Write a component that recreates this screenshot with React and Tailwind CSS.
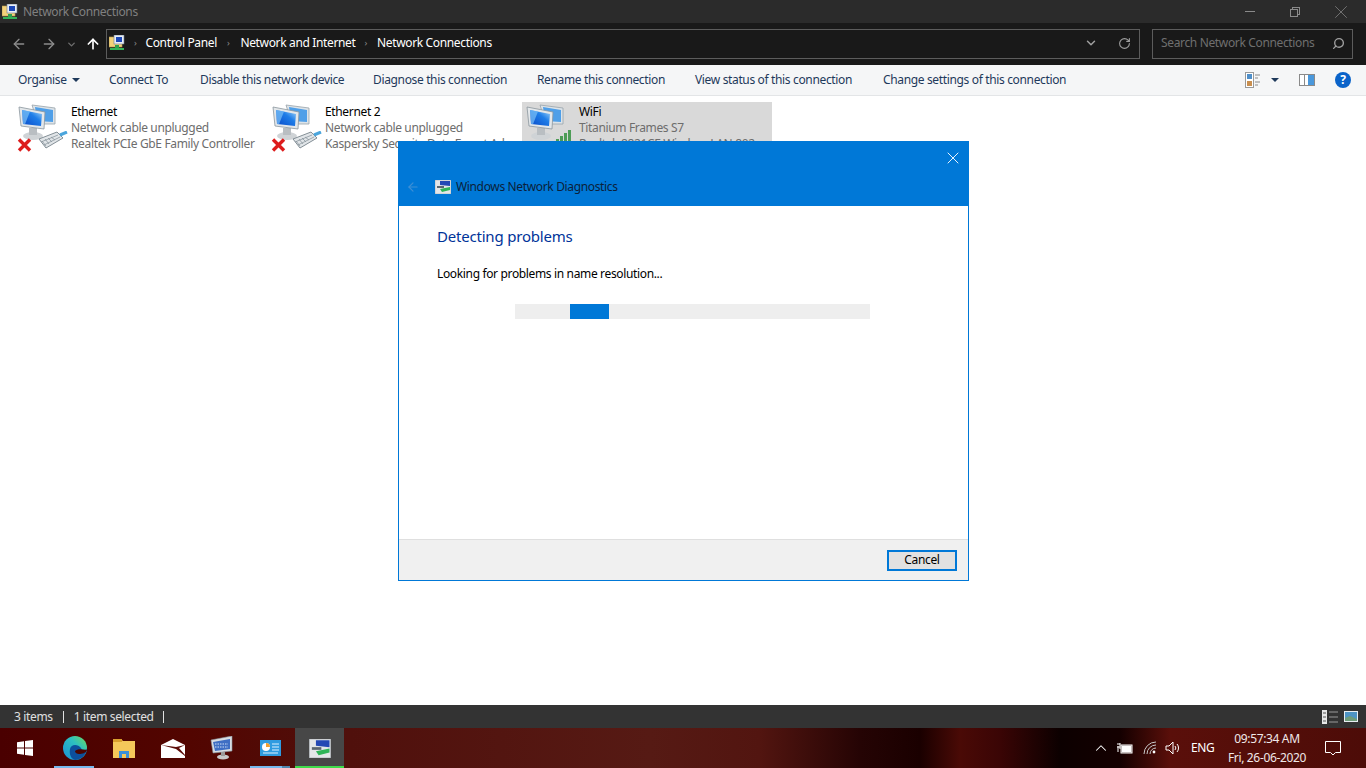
import { ArrowLeft, ArrowRight, ArrowUp, ChevronDown, ChevronUp, RotateCw, Search, X } from 'lucide-react';

const font = { fontFamily: '"Noto Sans", "Liberation Sans", sans-serif' };

function PcIcon({ id }) {
  return (
    <svg width="42" height="40" viewBox="0 0 42 40">
      <defs>
        <linearGradient id={id} x1="0" y1="1" x2="1" y2="0">
          <stop offset="0" stopColor="#0848c8" />
          <stop offset="0.6" stopColor="#1f7ee8" />
          <stop offset="1" stopColor="#a8d8f8" />
        </linearGradient>
      </defs>
      <path d="M14 1 L37 4 L37 20 L20 20 Z" fill="#dde3e8" stroke="#98a3ab" strokeWidth="0.8" />
      <path d="M17 3 L35 6 L35 18 L19 17 Z" fill="#4f9fe8" />
      <ellipse cx="15" cy="32" rx="10" ry="4" fill="#cfd3d6" />
      <rect x="11" y="24" width="8" height="7" fill="#b9bec2" />
      <path d="M1 3 L27 8 L26 25 L3 22 Z" fill="#e3e7ea" stroke="#8a959d" strokeWidth="0.8" />
      <path d="M4 6 L24 10 L23 22 L5 20 Z" fill={`url(#${id})`} />
      <path d="M4 6 L12 7.6 L7 20.2 L5 20 Z" fill="#7cc2f6" opacity="0.7" />
    </svg>
  );
}

function RedX() {
  return (
    <svg width="15" height="14" viewBox="0 0 15 14">
      <path d="M2 1.5 L13 12.5 M13 1.5 L2 12.5" stroke="#dd1c1c" strokeWidth="3.4" />
    </svg>
  );
}

function Plug() {
  return (
    <svg width="30" height="18" viewBox="0 0 30 18">
      <path d="M1 8 L19 1 L25 7 L8 17 Z" fill="#e1e5e8" stroke="#77838b" strokeWidth="0.9" />
      <path d="M4 10 L8 15 M7 8 L11 13 M10 7 L14 11 M13 6 L17 9 M3 11 L20 4 M6 14 L22 6" stroke="#8c979e" strokeWidth="0.8" />
      <path d="M22 4 L29 1" stroke="#4aa5dc" strokeWidth="3" />
    </svg>
  );
}

function Bars() {
  return (
    <svg width="18" height="14" viewBox="0 0 18 14">
      <rect x="1" y="9" width="3" height="5" fill="#4d9c56" />
      <rect x="5" y="6" width="3" height="8" fill="#4d9c56" />
      <rect x="9" y="3" width="3" height="11" fill="#4d9c56" />
      <rect x="13" y="0" width="3" height="14" fill="#4d9c56" />
    </svg>
  );
}

function NetFolder({ size = 16 }) {
  return (
    <svg width={size} height={size} viewBox="0 0 16 16">
      <rect x="0" y="2" width="13" height="10" fill="#f3d27a" stroke="#b59b50" strokeWidth="0.6" />
      <rect x="5" y="0" width="10" height="9" fill="#e8eef5" stroke="#6c7a8a" strokeWidth="0.6" />
      <rect x="7" y="2" width="6" height="5" fill="#1c48b8" />
      <rect x="6" y="10" width="4" height="3" fill="#2e9e4f" />
      <rect x="1" y="13" width="14" height="2" fill="#33b357" />
    </svg>
  );
}

function DiagIcon({ w = 16, h = 14 }) {
  return (
    <svg width={w} height={h} viewBox="0 0 16 14">
      <rect x="0" y="0" width="16" height="14" fill="#e4e6e8" stroke="#9aa1a7" strokeWidth="0.5" />
      <path d="M5 1 L15 1 L15 6 L5 5 Z" fill="#2448b4" />
      <path d="M2 6 L9 6 L9 8 L2 8 Z" fill="#5c6670" />
      <path d="M5 9 L15 7 L15 10 L7 12 Z" fill="#2fb457" />
    </svg>
  );
}

function AdapterItem({ id, name, status, device, selected, bars }) {
  return (
    <div className={`flex w-[250px] h-[52px] ${selected ? 'bg-[#d9d9d9]' : ''}`}>
      <div className="relative w-[57px] shrink-0 pl-[4px] pt-[2px]">
        <PcIcon id={id} />
        {!bars && (
          <>
            <div className="absolute left-[3px] top-[36px]"><RedX /></div>
            <div className="absolute left-[24px] top-[29px]"><Plug /></div>
          </>
        )}
        {bars && <div className="absolute left-[33px] top-[28px]"><Bars /></div>}
      </div>
      <div className="min-w-0 pt-[2px] text-[12px] leading-[16px] whitespace-nowrap">
        <div className="text-black">{name}</div>
        <div className="text-[#6d6d6d]">{status}</div>
        <div className="text-[#6d6d6d]">{device}</div>
      </div>
    </div>
  );
}

function TaskIcon({ active, line, split, children }) {
  return (
    <div className={`relative w-[49px] h-full flex items-center justify-center ${active ? 'bg-[#474747]' : ''}`}>
      {children}
      {line && <div className="absolute bottom-0 left-[4px] right-[5px] h-[2px] bg-[#76b9ed]" />}
      {split && <div className="absolute bottom-0 right-[5px] w-[8px] h-[2px] bg-[#4f86ad]" />}
      {active && <div className="absolute bottom-0 inset-x-0 h-[2px] bg-[#3fdc4a]" />}
    </div>
  );
}

const actions = [
  ['Connect To', 'w-[91px]'],
  ['Disable this network device', 'w-[173px]'],
  ['Diagnose this connection', 'w-[164px]'],
  ['Rename this connection', 'w-[158px]'],
  ['View status of this connection', 'w-[188px]'],
  ['Change settings of this connection', 'w-[200px]'],
];

export default function App() {
  return (
    <div style={font} className="relative w-[1366px] h-[768px] overflow-hidden flex flex-col bg-white text-[12px] tracking-[-0.35px]">
      {/* title bar */}
      <div className="h-[23px] bg-[#2b2b2b] flex items-center shrink-0">
        <div className="ml-[2px] mr-[5px]"><NetFolder /></div>
        <span className="text-[#808080]">Network Connections</span>
        <div className="ml-auto flex items-center text-[#8a8a8a]">
          <div className="w-[10px] h-px bg-[#8a8a8a] mr-[35px]" />
          <div className="relative w-[10px] h-[10px] mr-[30px]">
            <div className="absolute right-0 top-0 w-[8px] h-[8px] border border-[#8a8a8a]" />
            <div className="absolute left-0 bottom-0 w-[8px] h-[8px] border border-[#8a8a8a] bg-[#2b2b2b]" />
          </div>
          <X size={22} strokeWidth={0.8} className="mr-[14px]" />
        </div>
      </div>

      {/* address bar */}
      <div className="h-[42px] bg-[#191919] flex items-center shrink-0">
        <ArrowLeft size={16} className="ml-[11px] text-[#8c8c8c]" />
        <ArrowRight size={16} className="ml-[14px] text-[#8c8c8c]" />
        <ChevronDown size={11} strokeWidth={3} className="ml-[9px] text-[#6e6e6e]" />
        <ArrowUp size={16} strokeWidth={2.5} className="ml-[8px] text-white" />
        <div className="ml-[5px] w-[1034px] h-[30px] pb-[2px] border border-[#5c5c5c] flex items-center text-white">
          <div className="ml-[2px]"><NetFolder /></div>
          <span className="ml-[9px] text-[#8c8c8c] text-[9px]">›</span>
          <span className="ml-[9px]">Control Panel</span>
          <span className="ml-[10px] text-[#8c8c8c] text-[9px]">›</span>
          <span className="ml-[11px]">Network and Internet</span>
          <span className="ml-[9px] text-[#8c8c8c] text-[9px]">›</span>
          <span className="ml-[10px]">Network Connections</span>
          <ChevronDown size={14} strokeWidth={2.5} className="ml-auto mr-[20px] text-[#a0a0a0]" />
          <RotateCw size={13} className="mr-[8px] text-[#a0a0a0]" />
        </div>
        <div className="ml-[12px] w-[201px] h-[30px] pb-[2px] border border-[#5c5c5c] flex items-center text-[#6f6f6f] pl-[8px]">
          <span className="whitespace-nowrap">Search Network Connections</span>
          <Search size={13} strokeWidth={2.5} className="ml-auto mr-[7px] text-[#a0a0a0] -scale-x-100" />
        </div>
      </div>

      {/* command bar */}
      <div className="h-[31px] bg-[#f5f6f7] border-b border-[#e3e5e7] flex items-center shrink-0 text-[#1e395b]">
        <div className="ml-[18px] w-[91px] flex items-center whitespace-nowrap">
          Organise
          <span className="ml-[5px] w-0 h-0 border-x-[4px] border-x-transparent border-t-[4px] border-t-[#1e395b]" />
        </div>
        {actions.map(([label, w]) => (
          <div key={label} className={`${w} whitespace-nowrap`}>{label}</div>
        ))}
        <div className="ml-auto flex items-center">
          <svg width="16" height="16" viewBox="0 0 16 16">
            <rect x="0.5" y="0.5" width="8" height="15" fill="#fff" stroke="#9a9a9a" />
            <rect x="2" y="2" width="5" height="5" fill="#4f8fc9" />
            <rect x="2" y="9" width="5" height="5" fill="#c98f4f" />
            <path d="M10 3h5M10 6h3M10 10h5M10 13h3" stroke="#8a8a8a" />
          </svg>
          <span className="ml-[10px] w-0 h-0 border-x-[4px] border-x-transparent border-t-[4px] border-t-[#1e395b]" />
          <svg width="16" height="12" viewBox="0 0 16 12" className="ml-[20px]">
            <rect x="0.5" y="0.5" width="15" height="11" fill="#fff" stroke="#8a8a8a" />
            <rect x="9" y="1" width="6" height="10" fill="#4a98dc" />
            <rect x="5" y="1" width="1" height="10" fill="#8a8a8a" />
          </svg>
          <div className="ml-[20px] mr-[15px] w-[16px] h-[16px] rounded-full bg-[#0a63c9] text-white text-[12px] font-bold leading-[16px] text-center">?</div>
        </div>
      </div>

      {/* adapters list */}
      <div className="flex-1 pl-[14px] pt-[6px] flex gap-[4px] items-start">
        <AdapterItem id="pc1" name="Ethernet" status="Network cable unplugged" device="Realtek PCIe GbE Family Controller" />
        <AdapterItem id="pc2" name="Ethernet 2" status="Network cable unplugged" device="Kaspersky Security Data Escort Ad..." />
        <AdapterItem id="pc3" selected bars name="WiFi" status="Titanium Frames S7" device="Realtek 8821CE Wireless LAN 802..." />
      </div>

      {/* status bar */}
      <div className="h-[23px] bg-[#333333] flex items-center text-[#e0e0e0] shrink-0">
        <span className="ml-[14px]">3 items</span>
        <span className="ml-[10px] h-[12px] w-px bg-[#e0e0e0]" />
        <span className="ml-[10px]">1 item selected</span>
        <span className="ml-[9px] h-[12px] w-px bg-[#e0e0e0]" />
        <div className="ml-auto flex items-center">
          <svg width="16" height="14" viewBox="0 0 16 14">
            <rect x="0" y="0" width="5" height="14" fill="#e8e8e8" />
            <path d="M1 3h3M1 7h3M1 11h3" stroke="#555" />
            <path d="M7 2h9M7 7h9M7 12h9" stroke="#9a9a9a" />
          </svg>
          <svg width="14" height="11" viewBox="0 0 14 11" className="ml-[6px] mr-[8px]">
            <rect width="14" height="11" fill="#e8eef2" />
            <rect x="1" y="1" width="12" height="9" fill="#4e94c4" />
            <path d="M1 7 L6 5 L13 8 L13 10 L1 10 Z" fill="#6e9c7a" />
          </svg>
        </div>
      </div>

      {/* taskbar */}
      <div className="h-[40px] shrink-0 flex items-center text-white bg-[linear-gradient(90deg,#4a0000_0px,#520500_190px,#50100c_350px,#561a14_650px,#521510_760px,#250404_860px,#1a0000_920px,#4a0a06_960px,#3a0505_1000px,#0c0000_1060px,#140000_1120px,#5a0f0a_1170px,#4d0c08_1366px)]">
        <div className="w-[50px] h-full flex items-center justify-center">
          <svg width="16" height="16" viewBox="0 0 16 16" fill="#fff">
            <path d="M0 2.3 L7 1.3 V7.6 H0 Z M8 1.1 L16 0 V7.6 H8 Z M0 8.4 H7 V14.7 L0 13.7 Z M8 8.4 H16 V16 L8 14.9 Z" />
          </svg>
        </div>
        <TaskIcon line>
          <svg width="24" height="24" viewBox="0 0 24 24">
            <defs>
              <linearGradient id="edgeTop" x1="0" y1="1" x2="1" y2="0">
                <stop offset="0" stopColor="#1a8fd6" />
                <stop offset="0.6" stopColor="#2dbfc0" />
                <stop offset="1" stopColor="#6fdc5a" />
              </linearGradient>
            </defs>
            <circle cx="12" cy="12" r="12" fill="url(#edgeTop)" />
            <path d="M7 13 C8 8 15 8 18 12 C19 15 21 15 24 13 C23 20 17 24 12 24 C8 23 6 18 7 13 Z" fill="#0c4f9c" />
            <path d="M12 15 C14 13 18 13 24 14 C23 17 19 18 16 18 C14 18 12 17 12 15 Z" fill="#4a0500" />
          </svg>
        </TaskIcon>
        <TaskIcon>
          <svg width="22" height="19" viewBox="0 0 22 19">
            <path d="M0 0 H8 L10 2 H22 V19 H0 Z" fill="#f5c85a" />
            <rect x="0" y="0" width="9" height="3" fill="#d9a02e" />
            <path d="M6 19 V12 H16 V19 H13 V15 H9 V19 Z" fill="#3a8fd9" />
          </svg>
        </TaskIcon>
        <TaskIcon>
          <svg width="24" height="19" viewBox="0 0 24 19">
            <path d="M0 6 L12 0 L24 6 V19 H0 Z" fill="#fff" />
            <path d="M0 6 L15 10 L24 17 L24 16 L18 9 L24 6 L15 8 Z" fill="#5c0c08" />
          </svg>
        </TaskIcon>
        <TaskIcon>
          <svg width="24" height="24" viewBox="0 0 24 24">
            <path d="M1 4 L22 0 L22 15 L3 17 Z" fill="#d8dee3" stroke="#8a949c" strokeWidth="0.6" />
            <path d="M3 6 L20 3 L20 13 L5 15 Z" fill="#3f6fc4" />
            <path d="M5 8h13M5 11h13" stroke="#cfe0f7" strokeDasharray="1.5 1" />
            <ellipse cx="13" cy="21" rx="6" ry="2.5" fill="#c9c9c9" />
            <rect x="11" y="16" width="4" height="4" fill="#9a9a9a" />
          </svg>
        </TaskIcon>
        <TaskIcon line split>
          <svg width="21" height="16" viewBox="0 0 21 16">
            <rect width="21" height="16" fill="#2f9be0" />
            <circle cx="6" cy="7" r="4" fill="#fff" />
            <path d="M6 7 V3 A4 4 0 0 1 10 7 Z" fill="#f0a030" />
            <path d="M12 4h7M12 7h7M12 10h7M3 13h15" stroke="#dff1ff" />
          </svg>
        </TaskIcon>
        <TaskIcon active>
          <DiagIcon w={22} h={19} />
        </TaskIcon>

        <div className="ml-auto h-full flex items-center">
          <ChevronUp size={18} strokeWidth={1.4} />
          <svg width="16" height="12" viewBox="0 0 16 12" fill="none" stroke="#fff" className="ml-[7px]">
            <path d="M0 2h3M0 5h3M3 1v6M1 4v6" />
            <rect x="4" y="3" width="11" height="8" />
            <rect x="5" y="4" width="9" height="6" fill="#fff" />
          </svg>
          <svg width="15" height="14" viewBox="0 0 15 14" fill="none" stroke="#c9c9c9" className="ml-[10px]">
            <path d="M1 13 A12 12 0 0 1 13 1 M4 13 A9 9 0 0 1 13 4 M7 13 A6 6 0 0 1 13 7" />
            <circle cx="11" cy="11" r="1.4" fill="#fff" stroke="none" />
          </svg>
          <svg width="16" height="14" viewBox="0 0 16 14" fill="none" stroke="#fff" className="ml-[7px]">
            <path d="M1 5h3L8 1v12L4 9H1Z" />
            <path d="M10 5a3 3 0 0 1 0 4M12 3a6 6 0 0 1 0 8" />
          </svg>
          <span className="ml-[10px] w-[24px]">ENG</span>
          <div className="ml-[4px] w-[96px] text-center leading-[19px] text-[12px] text-[#f0e8e8]">
            <div>09:57:34 AM</div>
            <div>Fri, 26-06-2020</div>
          </div>
          <svg width="16" height="16" viewBox="0 0 16 16" fill="none" stroke="#fff" className="ml-[10px] mr-[25px]">
            <path d="M0.5 1.5h15v11h-5l-2.5 2.5-2.5-2.5h-5Z" />
          </svg>
        </div>
      </div>

      {/* diagnostics dialog */}
      <div className="absolute left-[398px] top-[141px] w-[571px] h-[440px] bg-white border border-[#0078d7] flex flex-col">
        <div className="h-[64px] bg-[#0078d7] shrink-0 flex flex-col">
          <div className="h-[30px] flex justify-end items-center pr-[5px] pt-[1px]">
            <X size={20} strokeWidth={1.1} className="text-white" />
          </div>
          <div className="flex items-center mt-[1px] h-[28px]">
            <ArrowLeft size={14} className="ml-[7px] text-[#3d8fd6]" />
            <div className="ml-[15px]"><DiagIcon /></div>
            <span className="ml-[5px] text-[#0b1f3a]">Windows Network Diagnostics</span>
          </div>
        </div>
        <div className="flex-1 pl-[38px] pt-[19px]">
          <h1 className="text-[15px] leading-[22px] tracking-[-0.2px] text-[#003399]">Detecting problems</h1>
          <p className="mt-[19px] leading-[16px] text-black">Looking for problems in name resolution...</p>
          <div className="mt-[22px] ml-[78px] w-[355px] h-[15px] bg-[#eeeeee] flex">
            <div className="ml-[55px] w-[39px] bg-[#0078d7]" />
          </div>
        </div>
        <div className="h-[41px] bg-[#f0f0f0] border-t border-[#dfdfdf] shrink-0 flex justify-end items-center pr-[11px]">
          <button className="w-[70px] h-[21px] border-2 border-[#0078d7] bg-[#e1e1e1] text-black text-[12px] leading-none">Cancel</button>
        </div>
      </div>
    </div>
  );
}
